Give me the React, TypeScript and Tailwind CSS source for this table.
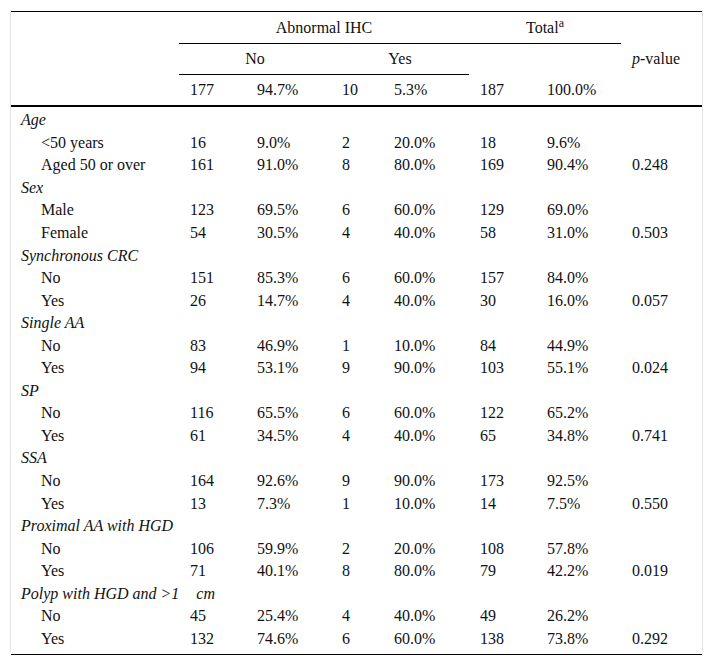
import React from "react";

const COLS = "grid grid-cols-[168px_67px_85px_52px_86px_67px_85px_81px]";

type Row = [string, string, string, string, string, string, string, string];
type Section = { title: React.ReactNode; rows: Row[] };

const sections: Section[] = [
  { title: "Age", rows: [
    ["<50 years", "16", "9.0%", "2", "20.0%", "18", "9.6%", ""],
    ["Aged 50 or over", "161", "91.0%", "8", "80.0%", "169", "90.4%", "0.248"],
  ] },
  { title: "Sex", rows: [
    ["Male", "123", "69.5%", "6", "60.0%", "129", "69.0%", ""],
    ["Female", "54", "30.5%", "4", "40.0%", "58", "31.0%", "0.503"],
  ] },
  { title: "Synchronous CRC", rows: [
    ["No", "151", "85.3%", "6", "60.0%", "157", "84.0%", ""],
    ["Yes", "26", "14.7%", "4", "40.0%", "30", "16.0%", "0.057"],
  ] },
  { title: "Single AA", rows: [
    ["No", "83", "46.9%", "1", "10.0%", "84", "44.9%", ""],
    ["Yes", "94", "53.1%", "9", "90.0%", "103", "55.1%", "0.024"],
  ] },
  { title: "SP", rows: [
    ["No", "116", "65.5%", "6", "60.0%", "122", "65.2%", ""],
    ["Yes", "61", "34.5%", "4", "40.0%", "65", "34.8%", "0.741"],
  ] },
  { title: "SSA", rows: [
    ["No", "164", "92.6%", "9", "90.0%", "173", "92.5%", ""],
    ["Yes", "13", "7.3%", "1", "10.0%", "14", "7.5%", "0.550"],
  ] },
  { title: "Proximal AA with HGD", rows: [
    ["No", "106", "59.9%", "2", "20.0%", "108", "57.8%", ""],
    ["Yes", "71", "40.1%", "8", "80.0%", "79", "42.2%", "0.019"],
  ] },
  { title: (<>Polyp with HGD and &gt;1<span className="ml-[17px]">cm</span></>), rows: [
    ["No", "45", "25.4%", "4", "40.0%", "49", "26.2%", ""],
    ["Yes", "132", "74.6%", "6", "60.0%", "138", "73.8%", "0.292"],
  ] },
];

export default function App() {
  return (
    <div className="bg-white w-[713px] h-[667px] text-[16px] text-[#111] [font-family:'Liberation_Serif',serif] leading-none">
      <div className="pt-[10px] pl-[10px]">
        <div className="w-[693px] border-x border-[#e3e3e3] pb-[2px]">
          <div className="pt-px">
            {/* header */}
            <div className={`${COLS} grid-rows-[32px_31px_30px] border-t border-black border-b-2`}>
              <div className="col-start-1 row-start-1 row-span-3" />
              <div className="col-start-2 col-span-4 row-start-1 border-b border-black flex items-center justify-center">Abnormal IHC</div>
              <div className="col-start-6 col-span-2 row-start-1 border-b border-black flex items-center justify-center">
                <span>Total<sup>a</sup></span>
              </div>
              <div className="col-start-8 row-start-1 row-span-3 flex items-center pl-[11px]"><span><i>p</i>-value</span></div>
              <div className="col-start-2 col-span-2 row-start-2 border-b border-black flex items-center justify-center">No</div>
              <div className="col-start-4 col-span-2 row-start-2 border-b border-black flex items-center justify-center">Yes</div>
              {["177", "94.7%", "10", "5.3%", "187", "100.0%"].map((t, i) => (
                <div key={i} className="row-start-3 flex items-center pl-[11px]">{t}</div>
              ))}
            </div>
            {/* body */}
            <div className="flex flex-col pt-[2px]">
              {sections.map((s, si) => (
                <React.Fragment key={si}>
                  <div className="h-[22.55px] flex items-center pl-[10px] italic whitespace-nowrap">{s.title}</div>
                  {s.rows.map((r, ri) => (
                    <div key={ri} className={`${COLS} h-[22.55px] items-center`}>
                      <div className="pl-[30px] whitespace-nowrap">{r[0]}</div>
                      {r.slice(1).map((c, ci) => (
                        <div key={ci} className="pl-[11px] whitespace-nowrap">{c}</div>
                      ))}
                    </div>
                  ))}
                </React.Fragment>
              ))}
            </div>
          </div>
        </div>
        <div className="mt-[2px] ml-px w-[691px] h-px bg-black" />
      </div>
    </div>
  );
}
